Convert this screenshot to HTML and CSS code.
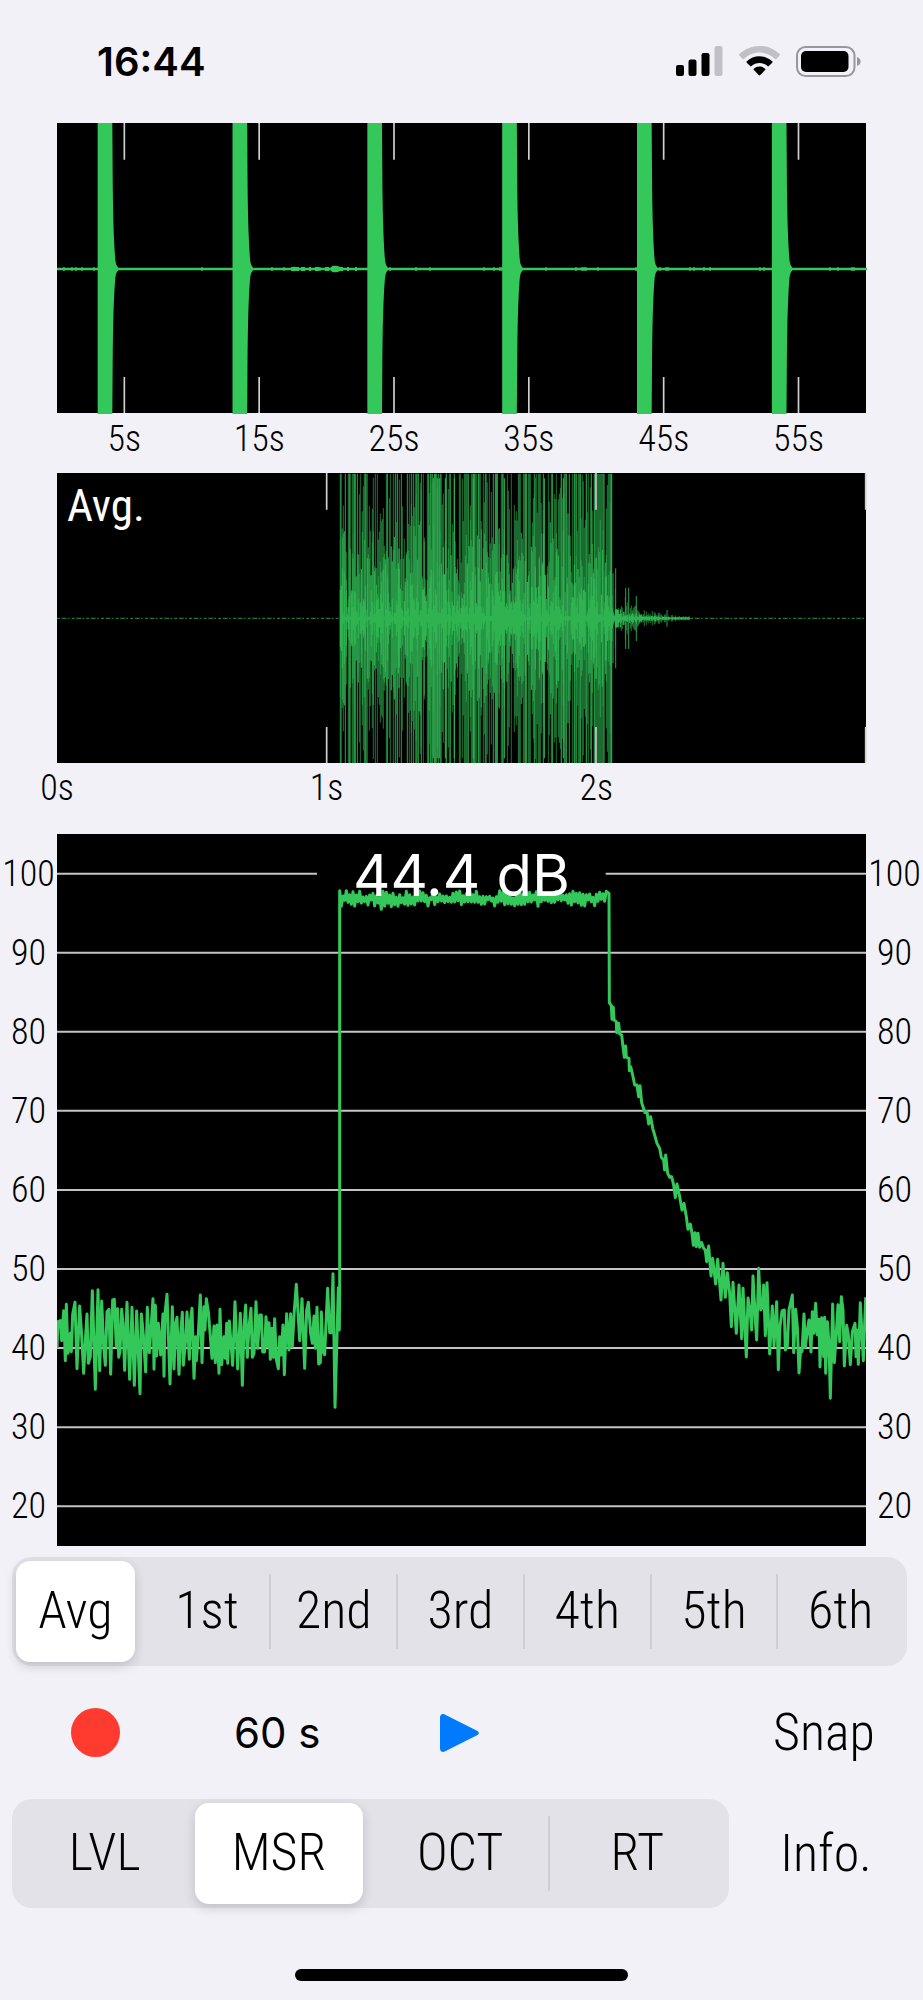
FILE: index.html
```
<!DOCTYPE html>
<html lang="en">
<head>
    <meta charset="UTF-8">
    <meta name="viewport" content="width=device-width, initial-scale=1.0">
    <title>Sound Level - MSR</title>
    <link rel="stylesheet" href="styles.css">
</head>
<body>

<header class="status-bar">
    <time class="clock">16:44</time>
    <div class="status-icons">
        <svg class="signal" viewBox="0 0 47 30" aria-hidden="true">
            <rect x="0" y="19" width="8" height="11" rx="2.2"/>
            <rect x="12.500" y="13.500" width="8" height="16.500" rx="2.200"/>
            <rect x="25.500" y="7" width="8" height="23" rx="2.200"/>
            <rect class="off" x="38.500" y="0" width="8" height="30" rx="2.200"/>
        </svg>
        <svg class="wifi" viewBox="0 0 41 30" aria-hidden="true">
            <path class="off" d="M20.500 0C12.700 0 5.600 3.100.4 8.100a1 1 0 0 0 0 1.400l3.300 3.400a1 1 0 0 0 1.400 0C9.200 9 14.600 6.600 20.500 6.600S31.800 9 35.900 12.900a1 1 0 0 0 1.400 0l3.300-3.400a1 1 0 0 0 0-1.400C35.400 3.100 28.300 0 20.500 0z"/>
            <path d="M20.500 10.300c-4.900 0-9.400 1.900-12.700 5a1 1 0 0 0 0 1.400l3.300 3.400a1 1 0 0 0 1.400 0c2.100-1.900 4.900-3.100 8-3.100s5.900 1.200 8 3.100a1 1 0 0 0 1.400 0l3.300-3.400a1 1 0 0 0 0-1.400c-3.300-3.100-7.800-5-12.700-5z"/>
            <path d="M20.500 20.600c-2.200 0-4.100.8-5.600 2.100a1 1 0 0 0 0 1.400l4.900 5a1 1 0 0 0 1.400 0l4.900-5a1 1 0 0 0 0-1.400c-1.500-1.300-3.400-2.100-5.600-2.100z"/>
        </svg>
        <svg class="battery" viewBox="0 0 65 31" aria-hidden="true">
            <rect class="case" x="1" y="1" width="57.500" height="29" rx="8.500"/>
            <rect x="5" y="5" width="47.500" height="21" rx="5"/>
            <path class="cap" d="M61 11c2.200.6 3.600 2.400 3.600 4.500S63.200 19.400 61 20z"/>
        </svg>
    </div>
</header>

<main>
    <!-- whole recording, 60 s -->
    <section class="plot wave">
        <svg id="recording" viewBox="0 0 2427 870" preserveAspectRatio="none" role="img" aria-label="Recording"></svg>
    </section>
    <div class="axis axis-mid">
        <span>5s</span><span>15s</span><span>25s</span><span>35s</span><span>45s</span><span>55s</span>
    </div>

    <!-- one averaged 3 s window -->
    <section class="plot wave">
        <svg id="window" viewBox="0 0 2427 870" preserveAspectRatio="none" role="img" aria-label="Average waveform"></svg>
        <strong class="wave-name">Avg.</strong>
    </section>
    <div class="axis axis-start">
        <span>0s</span><span>1s</span><span>2s</span>
    </div>

    <!-- level in dB over the same window -->
    <section class="level">
        <div class="scale">
            <span>100</span><span>90</span><span>80</span><span>70</span><span>60</span><span>50</span><span>40</span><span>30</span><span>20</span>
        </div>
        <div class="level-plot">
            <svg id="level" viewBox="0 0 2427 2136" preserveAspectRatio="none" role="img" aria-label="Level"></svg>
            <output class="reading">44.4 dB</output>
        </div>
        <div class="scale">
            <span>100</span><span>90</span><span>80</span><span>70</span><span>60</span><span>50</span><span>40</span><span>30</span><span>20</span>
        </div>
    </section>

    <fieldset class="segments" aria-label="Pulse">
        <label><input type="radio" name="pulse" checked><span>Avg</span></label>
        <label><input type="radio" name="pulse"><span>1st</span></label>
        <label><input type="radio" name="pulse"><span>2nd</span></label>
        <label><input type="radio" name="pulse"><span>3rd</span></label>
        <label><input type="radio" name="pulse"><span>4th</span></label>
        <label><input type="radio" name="pulse"><span>5th</span></label>
        <label><input type="radio" name="pulse"><span>6th</span></label>
    </fieldset>

    <div class="controls">
        <button type="button" aria-label="Record">
            <svg width="49" height="49" viewBox="0 0 49 49"><circle cx="24.500" cy="24.500" r="24.500" fill="#ff3b30"/></svg>
        </button>
        <button type="button" class="duration">60 s</button>
        <button type="button" aria-label="Play">
            <svg width="39" height="38" viewBox="0 0 39 38"><path d="M0 3.500C0 .8 2.300-.7 4.700.5L37 16.700c2.400 1.200 2.400 3.400 0 4.600L4.700 37.500C2.300 38.700 0 37.200 0 34.500z" fill="#007aff"/></svg>
        </button>
        <button type="button" class="snap">Snap</button>
    </div>

    <div class="modes">
        <fieldset class="segments" aria-label="Mode">
            <label><input type="radio" name="mode"><span>LVL</span></label>
            <label><input type="radio" name="mode" checked><span>MSR</span></label>
            <label><input type="radio" name="mode"><span>OCT</span></label>
            <label><input type="radio" name="mode"><span>RT</span></label>
        </fieldset>
        <button type="button">Info.</button>
    </div>
</main>

<div class="home-indicator"></div>

<script src="plots.js"></script>
</body>
</html>
```
FILE: styles.css
```
:root {
    --bg: #f2f1f7;
    --segment: #e3e2e8;
    --divider: #cfced4;
    --green: #34c759;
    --gutter: 57px;
    --narrow: "Roboto Condensed", "Liberation Sans", sans-serif;
}

* {
    box-sizing: border-box;
    margin: 0;
    padding: 0;
}

body {
    background: var(--bg);
    color: #000;
    font-family: var(--narrow);
    font-weight: 300;
}

button {
    border: none;
    background: none;
    color: inherit;
    font: inherit;
    font-size: 52px;
    line-height: 60px;
}

svg { display: block; }

/* status bar */
.status-bar {
    display: flex;
    align-items: center;
    justify-content: space-between;
    height: 123px;
    padding: 0 62px 0 97px;
}

.clock {
    font: 600 40px Inter, sans-serif;
}

.status-icons {
    display: flex;
    gap: 16px;
}

.signal { width: 47px; height: 30px; }
.wifi { width: 41px; height: 30px; }
.battery { width: 65px; height: 31px; }
.off { fill: #c1c0c6; }
.case { fill: none; stroke: #98979c; stroke-width: 2; }
.cap { fill: #98979c; }

/* waveforms */
.plot {
    position: relative;
    margin: 0 var(--gutter);
    background: #000;
}

.wave svg {
    width: 100%;
    height: 290px;
    overflow: visible;
}

.wave-name {
    position: absolute;
    top: 6px;
    left: 10px;
    color: #fff;
    font: 400 45px/54px var(--narrow);
}

.axis {
    display: grid;
    grid-auto-flow: column;
    grid-auto-columns: 1fr;
    margin: 0 var(--gutter);
    font-size: 36px;
    line-height: 50px;
}

.axis-mid {
    padding-top: 1px;
    margin-bottom: 9px;
    justify-items: center;
}

.axis-start { margin-bottom: 21px; }

/* label centred on the start of its column */
.axis-start span {
    display: flex;
    justify-content: center;
    width: 0;
}

/* level graph */
.level {
    display: grid;
    grid-template-columns: var(--gutter) 1fr var(--gutter);
    height: 712px;
}

.scale {
    display: grid;
    grid-template-rows: repeat(9, 1fr);
    place-items: center;
    font-size: 36px;
    line-height: 50px;
}

.level-plot {
    position: relative;
    background: #000;
}

.level-plot svg {
    width: 100%;
    height: 712px;
}

.reading {
    position: absolute;
    top: 6px;
    left: 0;
    right: 0;
    text-align: center;
    color: #fff;
    font: 400 58px/70px Inter, sans-serif;
}

.tick { stroke: #d0d0d0; stroke-width: 5; }
.grid { stroke: #c4c3c6; stroke-width: 6; }
.trace { fill: none; stroke: var(--green); stroke-width: 9; stroke-linejoin: round; }
.fill { fill: var(--green); }
.peak { stroke: #1b6a2f; }
.body { stroke: #279645; }
.core { stroke: #2eb350; }
.noise { stroke: #1d7a36; stroke-width: 4; stroke-dasharray: 9 5 14 4 5 7; }

/* segmented controls */
.segments {
    display: flex;
    height: 109px;
    padding: 4px;
    border: none;
    border-radius: 20px;
    background: var(--segment);
    font-size: 52px;
}

main > .segments { margin: 11px 16px 0 12px; }

.segments label {
    position: relative;
    display: flex;
    flex: 1;
    min-width: 0;
}

.segments input {
    position: absolute;
    inset: 0;
    appearance: none;
}

.segments span {
    display: flex;
    flex: 1;
    align-items: center;
    justify-content: center;
    padding-bottom: 2px;
    border-radius: 14px;
    z-index: 1;
}

.segments label + label::before {
    content: "";
    align-self: center;
    width: 2px;
    height: 75px;
    background: var(--divider);
}

.segments label:has(:checked)::before,
.segments label:has(:checked) + label::before {
    background: none;
}

.segments :checked + span {
    margin-right: 8px;
    background: #fff;
    box-shadow: 0 4px 12px rgba(0, 0, 0, 0.16);
}

/* bottom controls */
.controls {
    display: grid;
    grid-template-columns: repeat(5, 1fr);
    align-items: center;
    justify-items: center;
    height: 133px;
    padding: 0 8px 0 4px;
}

.duration {
    font: 400 42px/60px Inter, sans-serif;
}

.snap { grid-column: 5; }

.modes {
    display: grid;
    grid-template-columns: 717fr 194fr;
    align-items: center;
    padding-left: 12px;
}

.home-indicator {
    width: 36%;
    height: 12px;
    margin: 61px auto 18px;
    border-radius: 6px;
    background: #000;
}
```
FILE: plots.js
```
const W = 2427;

// small repeatable noise source so the plots look the same on every load
let seed = 7;
function rnd() {
    seed = (seed * 1103515245 + 12345) % 2147483648;
    return seed / 2147483648;
}

function ticks(xs, h) {
    return xs.map(x => `<path class="tick" d="M${x} 0V110M${x} ${h - 108}V${h}"/>`).join('');
}

/* recording: six pulses, one every 10 s */
function drawRecording() {
    const mid = 438;
    let out = ticks([0, 1, 2, 3, 4, 5].map(i => 202 + i * 404.5), 870);
    let line = '';
    for (let x = 0; x <= W; x += 6) {
        const y = 4 + (rnd() > 0.9 ? 1 : 0) + (x > 690 && x < 900 && rnd() > 0.5 ? 2 : 0);
        line += `M${x} ${mid - y}h6v${y * 2}h-6z`;
    }
    line += `M815 ${mid}l12 -10h12l30 10l-30 10h-12z`;
    for (let i = 0; i < 6; i++) {
        const x = 122 + i * 404.5;
        line += `M${x} 0h44l1 150q1 180 8 262q2 16 9 22v8q-7 6 -9 22q-7 82 -8 262l-1 147h-44z`;
    }
    out += `<path class="fill" d="${line}"/>`;
    document.getElementById('recording').innerHTML = out;
}

/* averaged pulse from 1.05 s to 2.05 s, then the decay */
function drawWindow() {
    const mid = 436, start = 850, end = 1666;
    const layers = { peak: '', body: '', core: '' };
    const bar = (x, a) => `M${x} ${mid - a}V${mid + a}`;

    for (let x = start; x < end; x += 3) {
        const swell = 0.8 + 0.2 * Math.sin(x / 17) * Math.sin(x / 41);
        layers.peak += bar(x, Math.min(434, 20 + rnd() * 800 * swell));
        layers.body += bar(x, Math.min(434, rnd() > 0.78 ? 434 : 10 + rnd() * 320 * swell));
        layers.core += bar(x, Math.min(434, rnd() > 0.96 ? 420 : 5 + rnd() * rnd() * 300 * swell));
    }
    // a full-height edge closes the pulse
    layers.core += bar(end - 2, 434);
    for (let x = end; x < 1900; x += 3) {
        const env = 110 * Math.exp(-(x - end) / 70);
        layers.peak += bar(x, 2 + env * rnd());
        layers.core += bar(x, 2 + env * 0.4 * rnd());
    }
    [[1668, 135], [1676, 150], [1706, 92], [1715, 92], [1738, 68], [1830, 25]].forEach(p => {
        layers.body += bar(p[0], p[1]);
    });

    let out = `<path class="noise" d="M0 ${mid}H${start}M1900 ${mid}H${W}"/>`;
    for (const name in layers) {
        out += `<path class="${name}" stroke-width="3.2" d="${layers[name]}"/>`;
    }
    out += ticks([809, 1617, 2426], 870);
    document.getElementById('window').innerHTML = out;
}

/* level: x,y pairs */
const before = '0,1543 3,1463 10,1460 14,1520 20,1430 25,1580 28,1411 33,1558 40,1498 43,1553 47,1441 54,1405 60,1604 68,1416 73,1488 80,1618 86,1503 90,1440 94,1588 100,1568 106,1370 115,1666 123,1367 128,1610 134,1401 140,1538 145,1594 150,1433 156,1426 161,1621 167,1398 172,1396 178,1538 182,1424 185,1570 189,1553 194,1426 198,1468 203,1609 210,1405 218,1636 225,1420 232,1654 239,1431 249,1679 253,1440 259,1503 266,1614 271,1420 277,1556 281,1498 288,1394 291,1606 295,1414 299,1566 304,1468 311,1563 318,1440 321,1627 324,1438 330,1381 339,1650 346,1418 351,1605 356,1468 360,1450 366,1621 371,1498 376,1435 379,1594 385,1528 390,1434 397,1576 400,1463 405,1423 411,1633 416,1508 418,1580 423,1518 430,1383 435,1586 441,1418 444,1488 448,1394 454,1433 460,1508 465,1573 471,1476 475,1586 480,1473 486,1618 489,1426 494,1592 501,1508 505,1573 509,1468 512,1588 517,1461 527,1594 534,1403 542,1605 550,1438 556,1654 561,1478 566,1413 571,1570 576,1478 582,1423 586,1570 591,1558 597,1403 602,1543 608,1443 613,1443 617,1554 623,1554 627,1448 633,1538 636,1466 640,1576 645,1483 649,1570 653,1454 658,1576 664,1604 668,1508 673,1563 678,1473 682,1622 689,1439 696,1548 701,1439 706,1538 712,1428 718,1351 728,1520 735,1394 743,1603 749,1428 754,1405 761,1498 766,1528 771,1446 775,1543 780,1420 785,1590 790,1586 793,1434 798,1553 803,1562 808,1448 812,1363 818,1496 823,1496 828,1319 834,1720 840,1508 844,1361 847,1488';
const decay = '1656,178 1657,506 1663,515 1665,556 1669,520 1671,558 1678,563 1679,596 1685,568 1688,600 1694,603 1698,638 1702,670 1706,636 1708,670 1716,673 1717,710 1721,698 1727,723 1733,753 1740,753 1745,788 1749,755 1754,806 1764,836 1770,833 1775,870 1781,848 1787,883 1793,903 1800,928 1808,943 1813,970 1820,978 1823,1008 1826,963 1832,1018 1838,1030 1844,1028 1850,1053 1855,1091 1860,1050 1868,1088 1875,1128 1881,1108 1888,1148 1893,1186 1900,1170 1905,1198 1909,1234 1914,1196 1918,1238 1923,1198 1928,1240 1934,1226 1940,1243 1945,1248 1949,1283 1955,1236 1962,1326 1967,1273 1976,1350 1982,1276 1992,1398 1998,1288 2005,1390 2011,1316 2018,1378 2023,1478 2028,1345 2038,1498 2046,1353 2054,1514 2058,1363 2068,1569 2073,1392 2080,1438 2084,1488 2088,1326 2095,1458 2099,1518 2105,1303 2111,1428 2117,1418 2120,1353 2125,1505 2130,1346 2138,1560 2146,1416 2151,1536 2159,1403 2164,1607 2169,1478 2175,1431 2182,1428 2185,1548 2191,1538 2196,1428 2206,1383 2210,1556 2216,1426 2221,1478 2226,1617 2231,1548 2235,1553 2241,1440 2245,1540 2251,1488 2256,1458 2262,1554 2266,1433 2271,1498 2276,1408 2281,1503 2286,1456 2289,1599 2294,1451 2300,1568 2303,1450 2306,1618 2311,1463 2316,1528 2320,1693 2327,1410 2332,1586 2338,1498 2343,1412 2348,1523 2353,1388 2358,1428 2362,1596 2369,1474 2374,1503 2380,1592 2386,1493 2394,1468 2397,1568 2400,1488 2404,1591 2410,1406 2419,1580 2426,1390';

function drawLevel() {
    let out = '<path class="grid" d="M0 119H780M1646 119H2427"/>';
    for (let i = 1; i < 9; i++) {
        out += `<path class="grid" d="M0 ${119 + i * 237.2}H${W}"/>`;
    }
    let steady = '848,1370 848,170';
    for (let x = 853, up = false; x < 1652; x += 5, up = !up) {
        const reach = 2 + rnd() * 22 + (rnd() > 0.9 ? 8 : 0);
        steady += ` ${x},${Math.round(194 + (up ? -reach : reach))}`;
    }
    out += `<polyline class="trace" points="${before} ${steady} ${decay}"/>`;
    document.getElementById('level').innerHTML = out;
}

drawRecording();
drawWindow();
drawLevel();
```
